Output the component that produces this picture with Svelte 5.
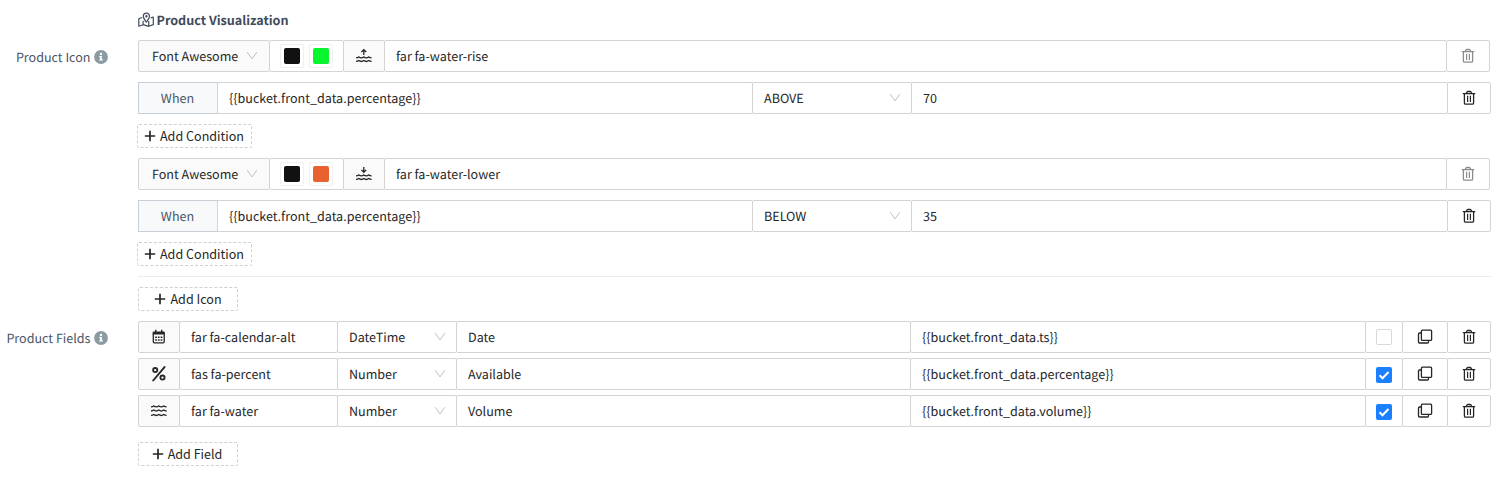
<script>
  const icons = [
    { color: '#0bf52f', dir: 'rise', name: 'far fa-water-rise', op: 'ABOVE', value: '70' },
    { color: '#e8622f', dir: 'lower', name: 'far fa-water-lower', op: 'BELOW', value: '35' }
  ];
  const fields = [
    { icon: 'calendar', name: 'far fa-calendar-alt', type: 'DateTime', label: 'Date', value: '{{bucket.front_data.ts}}', on: false },
    { icon: 'percent', name: 'fas fa-percent', type: 'Number', label: 'Available', value: '{{bucket.front_data.percentage}}', on: true },
    { icon: 'water', name: 'far fa-water', type: 'Number', label: 'Volume', value: '{{bucket.front_data.volume}}', on: true }
  ];
  const expr = '{{bucket.front_data.percentage}}';
  const wave = (y) => `M.2 ${y + 1}c1.100 0 2-.2 2.800-.9 1.400 1.100 3.600 1.100 5 0 1.400 1.100 3.600 1.100 5 0 .8.7 1.700.9 2.800.9`;
</script>

{#snippet trash()}
  <svg class="trash" width="14" height="16" viewBox="0 0 14 16" fill="none" stroke="currentColor">
    <path d="M.8 3.600h12.400M4.200 3.400l.9-1.500q.2-.4.7-.4h2.400q.5 0 .7.4l.9 1.500" stroke-width="1.300" />
    <path d="M2.400 3.800v9.100q0 1.200 1.200 1.200h6.800q1.200 0 1.200-1.200V3.800" stroke-width="1.300" />
    <path d="M5.600 5.800v6.200M8.400 5.800v6.200" stroke-width="1.200" />
  </svg>
{/snippet}

{#snippet chevron()}
  <svg class="chevron" width="12" height="12" viewBox="0 0 12 12" fill="none" stroke="#bfbfbf"><path d="M1.200 2.200 6 8.900l4.800-6.700" /></svg>
{/snippet}

{#snippet plus()}
  <svg class="plus" width="12" height="12" viewBox="0 0 12 12" stroke="currentColor" stroke-width="1.700"><path d="M6 .8v10.400M.8 6h10.400" /></svg>
{/snippet}

{#snippet info()}
  <svg width="14" height="14" viewBox="0 0 14 14"><circle cx="7" cy="7" r="6.900" fill="#8c9ba3" /><path d="M5.200 5.900h2.700v3.400h.9v1.300H5.200V9.300h.9V7.200h-.9z" fill="#fff" /><circle cx="7" cy="4" r="1.200" fill="#fff" /></svg>
{/snippet}

{#snippet glyph(kind)}
  <svg width="18" height="16" viewBox="0 0 18 16" fill="none" stroke="currentColor" stroke-width="1.300">
    {#if kind === 'calendar'}
      <path d="M3.300 5v7.800q0 1.100 1.100 1.100h8.700q1.100 0 1.100-1.100V5" />
      <path d="M2.600 5.500V3.700q0-1.300 1.300-1.300h9.700q1.300 0 1.300 1.300v1.800z" fill="currentColor" stroke="none" />
      <path d="M5.800.7v2.500M11.700.7v2.500" stroke-width="1.400" />
      <path d="M5.200 8.200h7.200M5.200 11h7.200" stroke-width="1.600" stroke-dasharray="1.700 1" />
    {:else if kind === 'percent'}
      <g stroke-width="1.800"><circle cx="5.200" cy="4.100" r="2.100" /><circle cx="12.500" cy="11.600" r="2.100" /><path d="M14.500 1.100 3.200 14.500" stroke-width="1.900" stroke-linecap="round" /></g>
    {:else if kind === 'water'}
      <g transform="translate(.8 0)"><path d={wave(2.800)} /><path d={wave(7)} /><path d={wave(11.400)} /></g>
    {:else}
      <g transform="translate(.8 0)"><path d={wave(8.800)} /><path d={wave(12.400)} />
        {#if kind === 'rise'}<path d="M8 6.900V1.800M5.600 4 8 1.600 10.400 4" />{:else}<path d="M8 1v5.100M5.600 3.900 8 6.300l2.400-2.400" />{/if}
      </g>
    {/if}
  </svg>
{/snippet}

<main>
  <section class="heading">
    <svg width="16" height="16" viewBox="0 0 16 16" fill="none" stroke="currentColor" stroke-width="1.200" stroke-linejoin="round">
      <path d="M8.300 10.200C6.800 8.200 5.300 6.300 5.300 4.200a3.100 3.100 0 0 1 6.200 0c0 2.100-1.700 4-3.200 6z" />
      <circle cx="8.400" cy="4.200" r=".6" />
      <path d="M4 5.500.8 6.800v7.400l4.300-1.500 5.600 1.600 4.600-1.700V5l-2.600.9M5.100 8.700v4M10.700 9v5.300" />
    </svg>
    <h1>Product Visualization</h1>
  </section>

  <section class="item">
    <div class="label">Product Icon {@render info()}</div>
    <div class="body">
      {#each icons as icon}
        <div class="row short">
          <div class="cell library">Font Awesome {@render chevron()}</div>
          <div class="cell colors">
            <span class="swatch"><i style="background:#111"></i></span>
            <span class="swatch"><i style="background:{icon.color}"></i></span>
          </div>
          <div class="cell addon">{@render glyph(icon.dir)}</div>
          <div class="cell grow">{icon.name}</div>
          <div class="cell action muted">{@render trash()}</div>
        </div>
        <div class="row">
          <div class="cell when">When</div>
          <div class="cell expr">{expr}</div>
          <div class="cell op">{icon.op} {@render chevron()}</div>
          <div class="cell grow">{icon.value}</div>
          <div class="cell action">{@render trash()}</div>
        </div>
        <button class="condition">{@render plus()}Add Condition</button>
      {/each}
      <hr />
      <button>{@render plus()}Add Icon</button>
    </div>
  </section>

  <section class="item fields">
    <div class="label">Product Fields {@render info()}</div>
    <div class="body">
      {#each fields as field}
        <div class="row">
          <div class="cell addon">{@render glyph(field.icon)}</div>
          <div class="cell name">{field.name}</div>
          <div class="cell type">{field.type} {@render chevron()}</div>
          <div class="cell title">{field.label}</div>
          <div class="cell grow">{field.value}</div>
          <div class="cell check">
            <span class="box" class:on={field.on}>
              {#if field.on}<svg width="16" height="16" viewBox="0 0 16 16" fill="none" stroke="#fff" stroke-width="2"><path d="m3.500 8.300 3 3 6-6.300" /></svg>{/if}
            </span>
          </div>
          <div class="cell copy">
            <svg width="16" height="16" viewBox="0 0 16 16" fill="none" stroke="currentColor" stroke-width="1.300"><rect x="4.400" y="1.200" width="10.200" height="10.200" rx="1" /><path d="M4.200 4H2.500q-1 0-1 1v8q0 1 1 1h8q1 0 1-1v-1.400" /></svg>
          </div>
          <div class="cell action">{@render trash()}</div>
        </div>
      {/each}
      <button>{@render plus()}Add Field</button>
    </div>
  </section>
</main>

<style>
  :global(body) { background: #fff; }
  main {
    box-sizing: border-box;
    width: 1508px;
    height: 479px;
    padding-top: 10px;
    font: 12.57px/20px "Noto Sans CJK SC", "Open Sans", sans-serif;
    text-rendering: geometricPrecision;
    color: #262626;
  }
  main :global(svg) { display: block; flex: none; }
  .heading { display: flex; align-items: center; gap: 2.5px; height: 20px; padding-left: 138px; color: #414b5a; }
  h1 { margin: 0; font-size: 12.6px; line-height: 20px; font-weight: 700; }
  .item { display: flex; padding: 10px 17px 0 0; }
  .label { display: flex; justify-content: flex-end; align-items: center; gap: 3.5px; width: 108px; height: 34px; margin-right: 30px; color: #4a5565; white-space: nowrap; }
  .body { flex: 1; }
  .row { display: flex; height: 32px; margin-bottom: 10px; }
  .short { margin-right: 1px; }
  .cell {
    box-sizing: border-box;
    display: flex;
    align-items: center;
    padding: 0 11px;
    border: 1px solid #d4d4d4;
    border-radius: 2px;
    background: #fff;
    white-space: nowrap;
  }
  .cell + .cell { margin-left: -1px; }
  .grow { flex: 1; }
  .library { width: 132px; padding: 0 11px 0 13px; justify-content: space-between; background: #fafafa; }
  .colors { width: 75px; gap: 5px; padding: 0 10px; }
  .swatch { box-sizing: border-box; width: 24px; height: 24px; padding: 3px; border: 1px solid #f0f0f0; border-radius: 2px; }
  .swatch i { display: block; width: 16px; height: 16px; border-radius: 2px; }
  .addon { width: 42px; padding: 0; justify-content: center; background: #fafafa; }
  .action { width: 44px; padding: 0; justify-content: center; }
  .muted { color: #8c8c8c; }
  .when { width: 80px; padding: 0 12px 0 11px; justify-content: center; border-color: #c8ced8; border-radius: 0; background: #f8f9fb; color: #4a5565; }
  .expr { width: 536px; }
  .op { width: 160px; padding-right: 10px; justify-content: space-between; }
  button {
    display: flex;
    box-sizing: border-box;
    align-items: center;
    justify-content: center;
    gap: 4px;
    width: 100px;
    height: 24px;
    padding: 0;
    border: 1px dashed #d0d0d0;
    border-radius: 2px;
    background: #fff;
    color: inherit;
    font: inherit;
  }
  .condition { width: 115px; margin: 0 0 10px -1px; padding-right: 1px; }
  hr { height: 1px; margin: 0 0 10px; border: 0; background: #ededed; }
  .fields .row { margin-bottom: 5px; }
  .name { width: 159px; }
  .type { width: 120px; padding-right: 10px; justify-content: space-between; }
  .title { width: 455px; }
  .check { width: 38px; padding: 0; justify-content: center; }
  .box { box-sizing: border-box; width: 16px; height: 16px; border: 1px solid #d9d9d9; border-radius: 2px; }
  .on { border: 0; background: #1a80ff; }
  .check .on { margin-top: 1px; }
  .copy { width: 46px; padding: 0; justify-content: center; }
  .fields button { margin-top: 15px; padding-right: 2px; }
</style>
